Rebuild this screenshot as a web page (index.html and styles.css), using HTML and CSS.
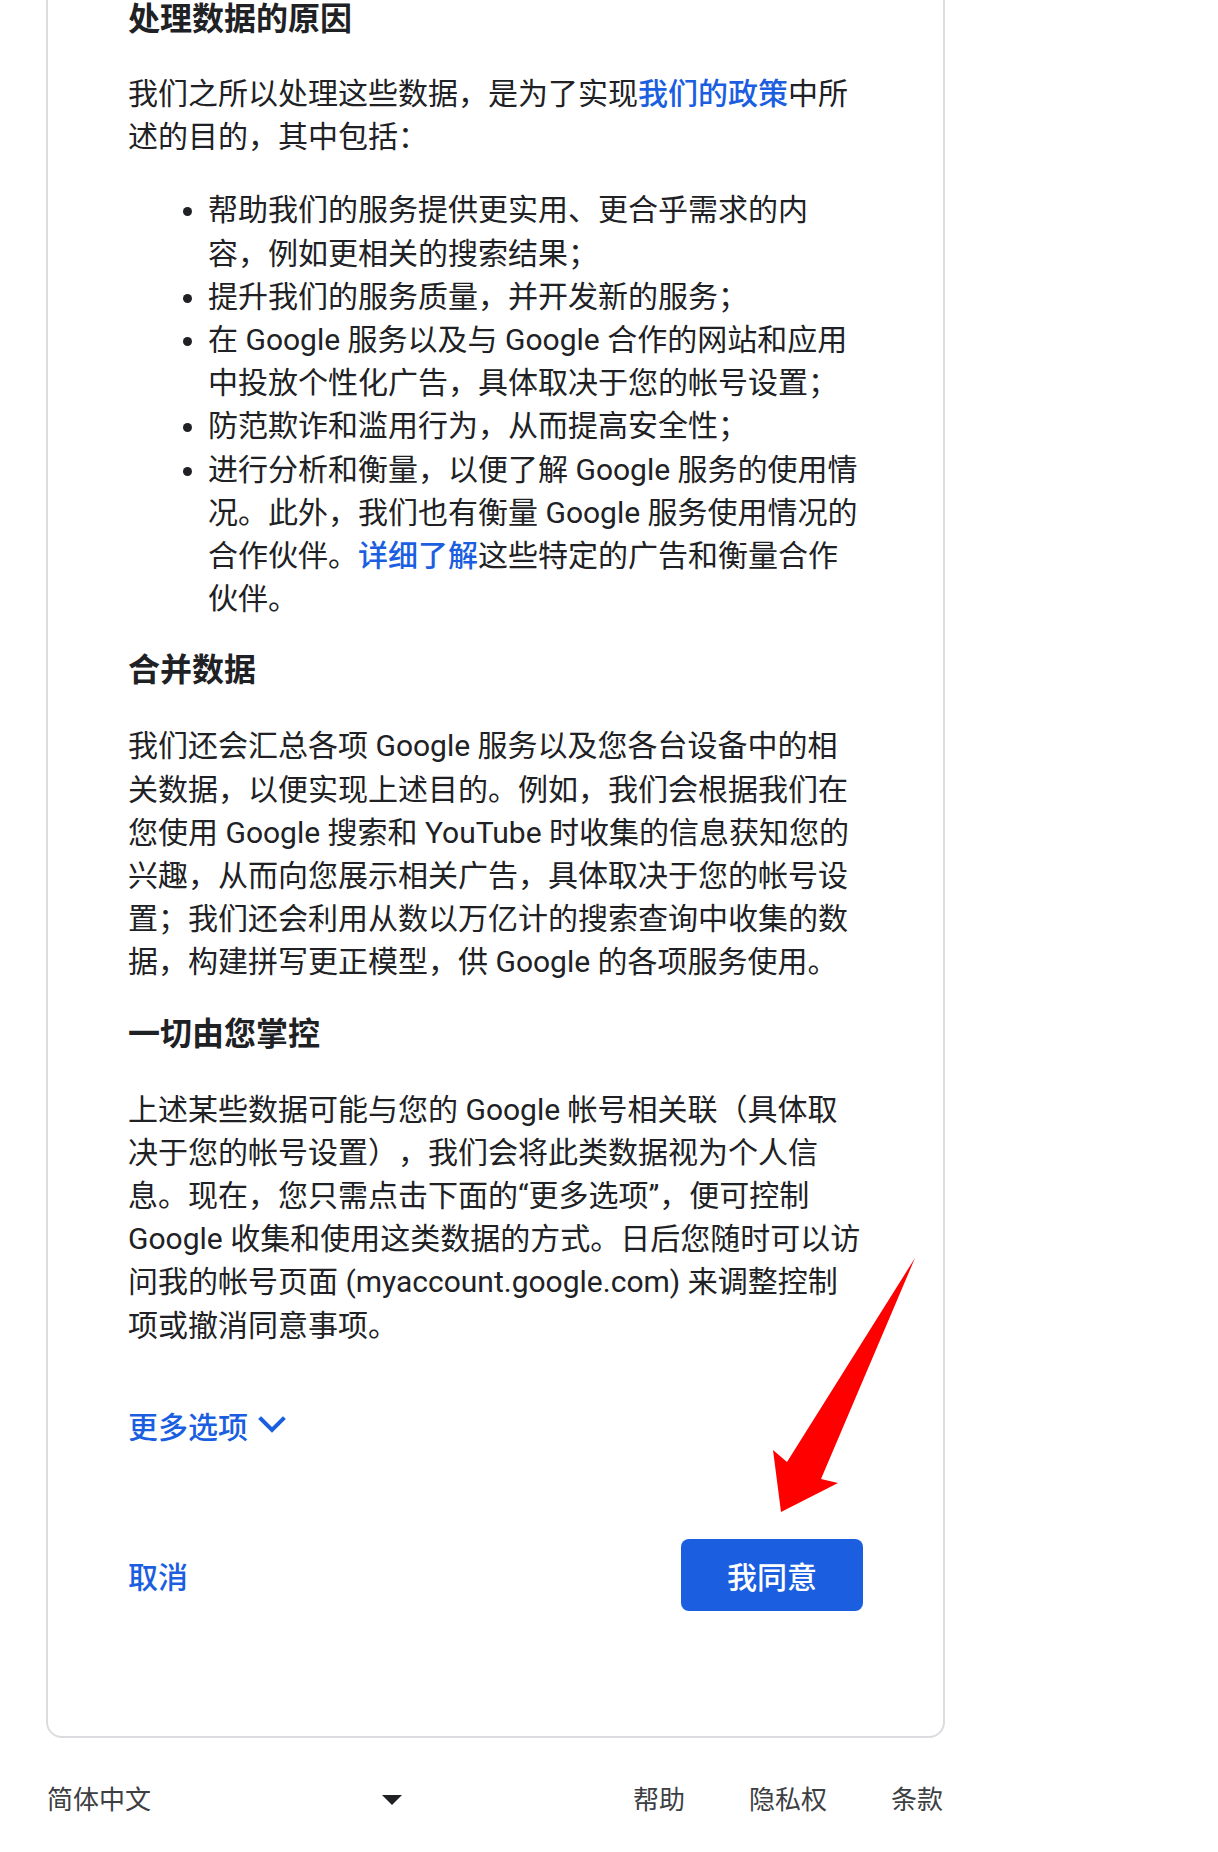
FILE: index.html
```html
<!DOCTYPE html>
<html lang="zh-CN">
<head>
<meta charset="utf-8">
<title>Google</title>
<link rel="stylesheet" href="styles.css">
</head>
<body>
<div class="page">
  <main class="card">
    <h2 class="sec-title sec-first">处理数据的原因</h2>
    <p class="text">我们之所以处理这些数据，是为了实现<a class="link" href="#">我们的政策</a>中所述的目的，其中包括：</p>
    <ul class="list">
      <li>帮助我们的服务提供更实用、更合乎需求的内容，例如更相关的搜索结果；</li>
      <li>提升我们的服务质量，并开发新的服务；</li>
      <li>在 Google 服务以及与 Google 合作的网站和应用中投放个性化广告，具体取决于您的帐号设置；</li>
      <li>防范欺诈和滥用行为，从而提高安全性；</li>
      <li>进行分析和衡量，以便了解 Google 服务的使用情况。此外，我们也有衡量 Google 服务使用情况的合作伙伴。<a class="link" href="#">详细了解</a>这些特定的广告和衡量合作伙伴。</li>
    </ul>

    <h2 class="sec-title">合并数据</h2>
    <p class="text">我们还会汇总各项 Google 服务以及您各台设备中的相关数据，以便实现上述目的。例如，我们会根据我们在您使用 Google 搜索和 YouTube 时收集的信息获知您的兴趣，从而向您展示相关广告，具体取决于您的帐号设置；我们还会利用从数以万亿计的搜索查询中收集的数据，构建拼写更正模型，供 Google 的各项服务使用。</p>

    <h2 class="sec-title">一切由您掌控</h2>
    <p class="text text-last">上述某些数据可能与您的 Google 帐号相关联（具体取决于您的帐号设置），我们会将此类数据视为个人信息。现在，您只需点击下面的“更多选项”，便可控制 Google 收集和使用这类数据的方式。日后您随时可以访问我的帐号页面 (myaccount.google.com) 来调整控制项或撤消同意事项。</p>

    <div class="more">
      <span class="more-label">更多选项</span>
      <svg class="chevron" width="28" height="18" viewBox="0 0 28 18" aria-hidden="true">
        <polyline points="3,3 14,14 25,3" fill="none" stroke="#1b5fe0" stroke-width="4" stroke-linecap="square"/>
      </svg>
    </div>

    <div class="actions">
      <a class="cancel" href="#">取消</a>
      <button class="agree" type="button">我同意</button>
    </div>
  </main>

  <footer class="footer">
    <div class="lang">
      <span class="lang-name">简体中文</span>
      <span class="lang-caret"></span>
    </div>
    <nav class="foot-links">
      <a href="#">帮助</a>
      <a href="#">隐私权</a>
      <a href="#">条款</a>
    </nav>
  </footer>

  <svg class="arrow" width="155" height="270" viewBox="0 0 155 270" aria-hidden="true">
    <polygon points="150,8 56,229 73,233 16,262 8,200 22,212" fill="#ff0000"/>
  </svg>
</div>
</body>
</html>
```

FILE: styles.css
```css
* {
  box-sizing: border-box;
}

html, body {
  margin: 0;
  padding: 0;
  background: #ffffff;
}

body {
  font-family: Roboto, "Noto Sans CJK SC", "Noto Sans", sans-serif;
  color: #202124;
  overflow: hidden;
  text-spacing-trim: space-all;
}

.page {
  position: relative;
  width: 1218px;
  height: 1852px;
  overflow: hidden;
}

.card {
  margin: -40px 0 0 46px;
  width: 899px;
  border: 2px solid #dadce0;
  border-radius: 16px;
  padding: 37px 76px 125px 80px;
}

.sec-title {
  margin: 30px 0 34px;
  font-size: 32px;
  line-height: 40px;
  font-weight: 700;
  color: #202124;
}

.sec-first {
  margin-top: 0;
  margin-bottom: 33px;
}

.text {
  margin: 0 0 30px;
  font-size: 30px;
  line-height: 43.2px;
}

.text-last {
  margin-bottom: 57px;
}

.list {
  margin: 0;
  padding: 0 0 0 80px;
  font-size: 30px;
  line-height: 43.2px;
}

.link {
  color: #1b5fe0;
  font-weight: 500;
  text-decoration: none;
}

.more {
  display: flex;
  align-items: center;
  gap: 10px;
  height: 43px;
  color: #1b5fe0;
  font-size: 30px;
  font-weight: 500;
}

.chevron {
  display: block;
}

.actions {
  margin-top: 92px;
  height: 72px;
  display: flex;
  align-items: center;
  justify-content: space-between;
}

.cancel {
  color: #1b5fe0;
  font-size: 30px;
  font-weight: 500;
  text-decoration: none;
}

.agree {
  width: 182px;
  height: 72px;
  margin-right: 4px;
  border: none;
  border-radius: 8px;
  background: #1b5fe0;
  color: #ffffff;
  font-family: Roboto, "Noto Sans CJK SC", sans-serif;
  font-size: 30px;
  font-weight: 500;
}

.footer {
  margin: 44px 0 0 47px;
  width: 896px;
  display: flex;
  align-items: center;
  font-size: 26px;
  line-height: 36px;
  color: #3c4043;
}

.lang {
  width: 355px;
  display: flex;
  align-items: center;
  justify-content: space-between;
}

.lang-caret {
  width: 0;
  height: 0;
  border-left: 10.5px solid transparent;
  border-right: 10.5px solid transparent;
  border-top: 10px solid #202124;
}

.foot-links {
  margin-left: auto;
  display: flex;
  gap: 64px;
}

.foot-links a {
  color: #3c4043;
  text-decoration: none;
}

.arrow {
  position: absolute;
  left: 765px;
  top: 1250px;
}
```
